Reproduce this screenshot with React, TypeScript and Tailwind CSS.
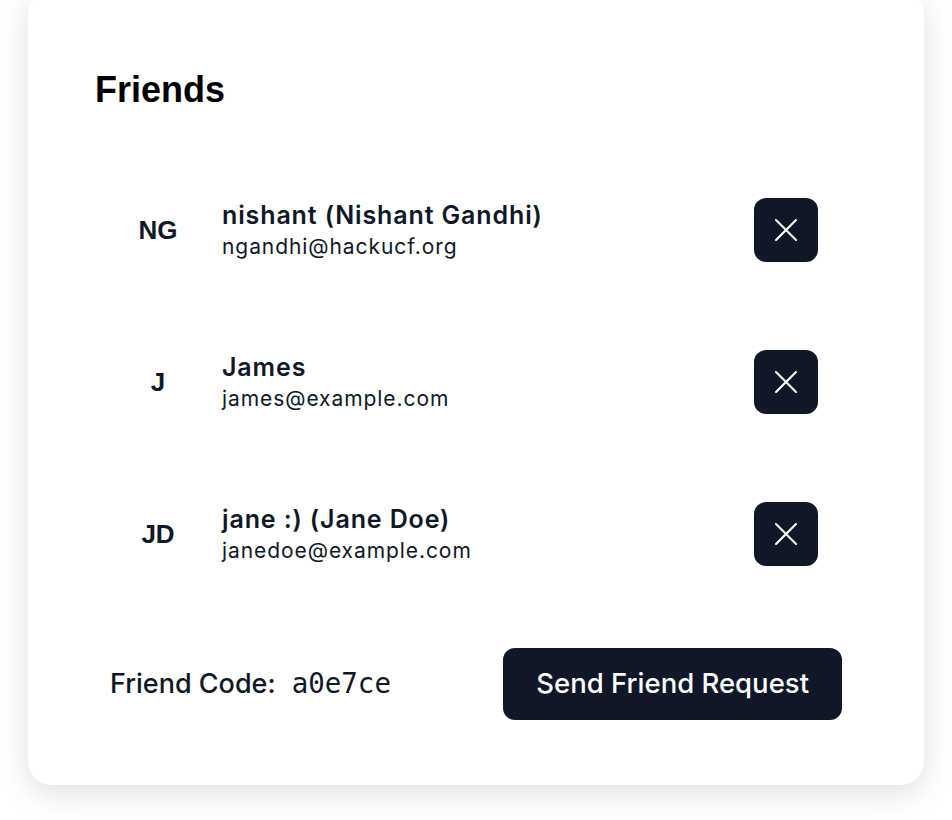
import { X } from "lucide-react";

type Friend = {
  initials: string;
  name: string;
  email: string;
};

const friends: Friend[] = [
  { initials: "NG", name: "nishant (Nishant Gandhi)", email: "ngandhi@hackucf.org" },
  { initials: "J", name: "James", email: "james@example.com" },
  { initials: "JD", name: "jane :) (Jane Doe)", email: "janedoe@example.com" },
];

const FriendRow = ({ friend }: { friend: Friend }) => {
  return (
    <div className="flex items-center pl-[31px] pr-[39px]">
      <div className="w-16 flex justify-center font-['Liberation_Sans',Arial,sans-serif] font-bold text-[26px] text-gray-900">
        {friend.initials}
      </div>
      <div className="flex-1 ml-8 font-['Inter',sans-serif] text-gray-900">
        <p className="text-[25px] font-semibold leading-8 tracking-[0.035em]">{friend.name}</p>
        <p className="text-[21px] leading-7 mt-0.5 tracking-[0.044em]">{friend.email}</p>
      </div>
      <button className="w-16 h-16 rounded-xl bg-gray-900 text-white flex items-center justify-center">
        <X size={40} strokeWidth={1.25} />
      </button>
    </div>
  );
};

export default function App() {
  return (
    <div className="min-h-screen bg-white px-[28px] pb-[40px]">
      <div className="-mt-[10px] rounded-3xl bg-white shadow-[0_8px_30px_rgba(0,0,0,0.13)] px-[67px] pt-20 pb-[65px]">
        <h1 className="font-['Liberation_Sans',Arial,sans-serif] font-bold text-4xl leading-10 text-black">
          Friends
        </h1>
        <div className="mt-[88px] flex flex-col gap-[88px]">
          {friends.map((f) => (
            <FriendRow key={f.email} friend={f} />
          ))}
        </div>
        <div className="mt-[82px] flex items-center justify-between px-[15px] font-['Inter',sans-serif] text-gray-900">
          <div className="flex items-baseline gap-[16px]">
            <span className="text-[27px] font-medium">Friend Code:</span>
            <span className="font-['DejaVu_Sans_Mono',monospace] text-[27.5px]">a0e7ce</span>
          </div>
          <button className="h-[72px] px-[33px] rounded-xl bg-gray-900 text-white text-[27.5px] font-medium">
            Send Friend Request
          </button>
        </div>
      </div>
    </div>
  );
}
